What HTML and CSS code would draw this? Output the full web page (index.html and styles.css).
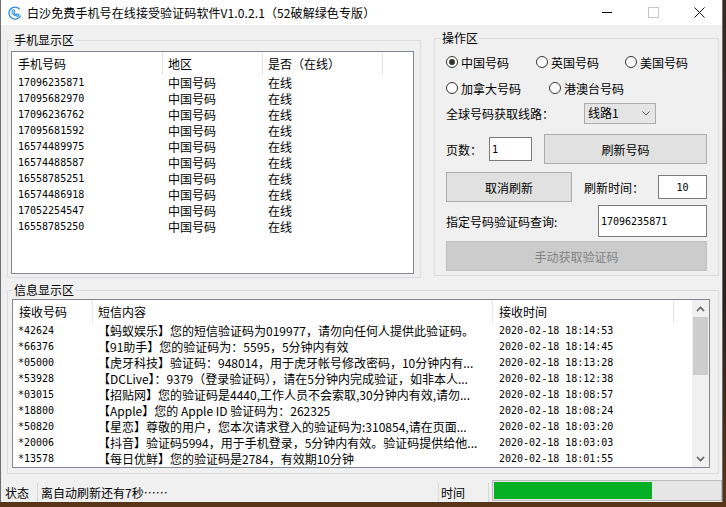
FILE: index.html
```html
<!DOCTYPE html>
<html lang="zh-CN">
<head>
<meta charset="utf-8">
<title>白沙免费手机号在线接受验证码软件</title>
<link rel="stylesheet" href="styles.css">
</head>
<body>
<div class="window">
  <div class="titlebar">
    <svg class="app-icon" viewBox="0 0 14 14">
      <path d="M11.6 3.2 A6 6 0 1 0 12.6 9.4" fill="none" stroke="#2d8ee3" stroke-width="1.4"/>
      <path d="M4.6 4.2 L6 3.8 L6.8 5.6 L6 6.4 Q6.8 8 8.2 8.6 L9 7.8 L10.8 8.6 L10.4 10 Q6.8 10.6 4.2 7.2 Q3.8 5.6 4.6 4.2 Z" fill="none" stroke="#2d8ee3" stroke-width="1.1" stroke-linejoin="round"/>
    </svg>
    <span class="title">白沙免费手机号在线接受验证码软件V1.0.2.1（52破解绿色专版）</span>
    <div class="controls">
      <span class="ctl"><span class="min"></span></span>
      <span class="ctl"><span class="max"></span></span>
      <span class="ctl"><svg width="11" height="11" viewBox="0 0 11 11"><path d="M0.5 0.5 L10.5 10.5 M10.5 0.5 L0.5 10.5" stroke="#111" stroke-width="1"/></svg></span>
    </div>
  </div>

  <div class="client">
    <div class="top">
      <fieldset class="grp grp-phone">
        <legend>手机显示区</legend>
        <div class="grp-body phone-body">
          <div class="listview phone-list">
            <div class="lv-head">
              <div class="pc1">手机号码</div>
              <div class="pc2">地区</div>
              <div class="pc3">是否（在线）</div>
              <div class="pc4"></div>
            </div>
            <div class="lv-row"><span class="pc1 num">17096235871</span><span class="pc2">中国号码</span><span class="pc3">在线</span></div>
            <div class="lv-row"><span class="pc1 num">17095682970</span><span class="pc2">中国号码</span><span class="pc3">在线</span></div>
            <div class="lv-row"><span class="pc1 num">17096236762</span><span class="pc2">中国号码</span><span class="pc3">在线</span></div>
            <div class="lv-row"><span class="pc1 num">17095681592</span><span class="pc2">中国号码</span><span class="pc3">在线</span></div>
            <div class="lv-row"><span class="pc1 num">16574489975</span><span class="pc2">中国号码</span><span class="pc3">在线</span></div>
            <div class="lv-row"><span class="pc1 num">16574488587</span><span class="pc2">中国号码</span><span class="pc3">在线</span></div>
            <div class="lv-row"><span class="pc1 num">16558785251</span><span class="pc2">中国号码</span><span class="pc3">在线</span></div>
            <div class="lv-row"><span class="pc1 num">16574486918</span><span class="pc2">中国号码</span><span class="pc3">在线</span></div>
            <div class="lv-row"><span class="pc1 num">17052254547</span><span class="pc2">中国号码</span><span class="pc3">在线</span></div>
            <div class="lv-row"><span class="pc1 num">16558785250</span><span class="pc2">中国号码</span><span class="pc3">在线</span></div>
          </div>
        </div>
      </fieldset>

      <fieldset class="grp grp-ops">
        <legend>操作区</legend>
        <div class="grp-body ops-body">
          <div class="orow r1">
            <span class="radio on w1"><span class="rb"></span>中国号码</span>
            <span class="radio w2"><span class="rb"></span>英国号码</span>
            <span class="radio"><span class="rb"></span>美国号码</span>
          </div>
          <div class="orow r2">
            <span class="radio w3"><span class="rb"></span>加拿大号码</span>
            <span class="radio"><span class="rb"></span>港澳台号码</span>
          </div>
          <div class="orow r3">
            <span class="lbl l-line">全球号码获取线路：</span>
            <span class="combo">线路1<svg width="8" height="5" viewBox="0 0 8 5"><path d="M0.5 0.5 L4 4 L7.5 0.5" fill="none" stroke="#555" stroke-width="1"/></svg></span>
          </div>
          <div class="orow r4">
            <span class="lbl l-page">页数：</span>
            <span class="tb tb-page num">1</span>
            <span class="btn b-refresh">刷新号码</span>
          </div>
          <div class="orow r5">
            <span class="btn b-cancel">取消刷新</span>
            <span class="lbl l-time">刷新时间：</span>
            <span class="tb tb-time num">10</span>
          </div>
          <div class="orow r6">
            <span class="lbl l-query">指定号码验证码查询:</span>
            <span class="tb tb-query num">17096235871</span>
          </div>
          <div class="orow r7">
            <span class="btn b-manual disabled">手动获取验证码</span>
          </div>
        </div>
      </fieldset>
    </div>

    <fieldset class="grp grp-info">
      <legend>信息显示区</legend>
      <div class="grp-body info-body">
        <div class="listview info-list">
          <div class="info-data">
            <div class="lv-head ih">
              <div class="ic1">接收号码</div>
              <div class="ic2">短信内容</div>
              <div class="ic3">接收时间</div>
              <div class="ic4"></div>
            </div>
            <div class="lv-row"><span class="ic1 num">*42624</span><span class="ic2">【蚂蚁娱乐】您的短信验证码为019977，请勿向任何人提供此验证码。</span><span class="ic3 num">2020-02-18 18:14:53</span></div>
            <div class="lv-row"><span class="ic1 num">*66376</span><span class="ic2">【91助手】您的验证码为：5595，5分钟内有效</span><span class="ic3 num">2020-02-18 18:14:45</span></div>
            <div class="lv-row"><span class="ic1 num">*05000</span><span class="ic2">【虎牙科技】验证码：948014，用于虎牙帐号修改密码，10分钟内有...</span><span class="ic3 num">2020-02-18 18:13:28</span></div>
            <div class="lv-row"><span class="ic1 num">*53928</span><span class="ic2">【DCLive】：9379（登录验证码），请在5分钟内完成验证，如非本人...</span><span class="ic3 num">2020-02-18 18:12:38</span></div>
            <div class="lv-row"><span class="ic1 num">*03015</span><span class="ic2">【招贴网】您的验证码是4440,工作人员不会索取,30分钟内有效,请勿...</span><span class="ic3 num">2020-02-18 18:08:57</span></div>
            <div class="lv-row"><span class="ic1 num">*18800</span><span class="ic2">【Apple】您的 Apple ID 验证码为：262325</span><span class="ic3 num">2020-02-18 18:08:24</span></div>
            <div class="lv-row"><span class="ic1 num">*50820</span><span class="ic2">【星恋】尊敬的用户，您本次请求登入的验证码为:310854,请在页面...</span><span class="ic3 num">2020-02-18 18:03:20</span></div>
            <div class="lv-row"><span class="ic1 num">*20006</span><span class="ic2">【抖音】验证码5994，用于手机登录，5分钟内有效。验证码提供给他...</span><span class="ic3 num">2020-02-18 18:03:03</span></div>
            <div class="lv-row"><span class="ic1 num">*13578</span><span class="ic2">【每日优鲜】您的验证码是2784，有效期10分钟</span><span class="ic3 num">2020-02-18 18:01:55</span></div>
          </div>
          <div class="vscroll">
            <span class="sb-btn"><svg width="9" height="6" viewBox="0 0 9 6"><path d="M1 5 L4.5 1.5 L8 5" fill="none" stroke="#606060" stroke-width="1.6"/></svg></span>
            <span class="sb-thumb"></span>
            <span class="sb-track"></span>
            <span class="sb-btn"><svg width="9" height="6" viewBox="0 0 9 6"><path d="M1 1 L4.5 4.5 L8 1" fill="none" stroke="#606060" stroke-width="1.6"/></svg></span>
          </div>
        </div>
      </div>
    </fieldset>
  </div>

  <div class="statusbar">
    <div class="sb-cell s1">状态</div>
    <div class="sb-cell s2">离自动刷新还有7秒……</div>
    <div class="sb-cell s3">时间</div>
    <div class="progress"><div class="bar" style="width:70%"></div></div>
  </div>
</div>
</body>
</html>
```

FILE: styles.css
```css
* { box-sizing: border-box; }
html, body { margin: 0; height: 100%; }
body {
  background: linear-gradient(180deg, #3a2a1f 0%, #2a211c 60%, #5a3518 100%);
  font-family: "Noto Sans CJK SC", "Microsoft YaHei", sans-serif;
  font-size: 12px;
  color: #000;
  overflow: hidden;
}
.num { font-family: "DejaVu Sans Mono", "Noto Sans CJK SC", monospace; font-size: 10px; }

.window {
  width: 723px;
  height: 502px;
  background: #f0f0f0;
  border-left: 1px solid #6e6e6e;
  border-right: 1px solid #6e6e6e;
  display: flex;
  flex-direction: column;
}

/* title bar */
.titlebar { height: 25px; background: #fff; display: flex; align-items: center; flex: none; }
.app-icon { width: 14px; height: 14px; margin-left: 7px; margin-right: 5px; flex: none; }
.title { line-height: 25px; white-space: nowrap; letter-spacing: 0.1px; }
.controls { margin-left: auto; display: flex; height: 25px; }
.ctl { width: 46px; height: 25px; display: flex; align-items: center; justify-content: center; }
.min { width: 10px; height: 1px; background: #000; }
.max { width: 11px; height: 11px; border: 1px solid #c6c6c6; }

/* client */
.client { flex: 1; display: flex; flex-direction: column; padding-left: 6px; }
.top { display: flex; align-items: flex-start; }

.grp { border: 1px solid #dcdcdc; margin: 0; padding: 0; min-width: 0; }
.grp legend { padding: 0 1px; margin-left: 5px; height: 16px; line-height: 16px; }

.grp-phone { width: 414px; margin-top: 7px; }
.phone-body { padding: 3px 6px 3px 3px; }
.grp-ops { width: 285px; margin-top: 5px; margin-left: 13px; }
.grp-ops legend { margin-left: 6px; }
.ops-body { padding: 0 0 4px 11px; display: flex; flex-direction: column; }
.grp-info { width: 712px; margin-top: 4px; }
.info-body { padding: 1px 8px 5px 4px; }

/* list views */
.listview { background: #fff; border: 1px solid #828790; overflow: hidden; }
.lv-head { display: flex; height: 23px; }
.lv-head > div { border-right: 1px solid #e5e5e5; line-height: 23px; white-space: nowrap; flex: none; }
.lv-head > div:last-child { border-right: none; flex: 1; }
.lv-row { display: flex; height: 16px; line-height: 16px; white-space: nowrap; }
.lv-row > span { flex: none; overflow: hidden; }

.phone-list { height: 223px; }
.pc1 { width: 151px; padding-left: 6px; }
.pc2 { width: 100px; padding-left: 5px; }
.pc3 { width: 120px; padding-left: 5px; }

.info-list { height: 169px; display: flex; }
.info-data { flex: 1; overflow: hidden; }
.lv-head.ih { height: 23px; }
.lv-head.ih > div { line-height: 24px; }
.ic1 { width: 80px; padding-left: 6px; }
.lv-row .ic1 { padding-left: 5px; }
.ic2 { width: 400px; padding-left: 5px; }
.ic3 { width: 181px; padding-left: 6px; }

.vscroll { width: 17px; flex: none; background: #f0f0f0; display: flex; flex-direction: column; }
.sb-btn { height: 17px; flex: none; display: flex; align-items: center; justify-content: center; }
.sb-thumb { height: 58px; margin: 0 1px; background: #cdcdcd; flex: none; }
.sb-track { flex: 1; }

/* operation rows */
.orow { display: flex; align-items: center; flex: none; white-space: nowrap; }
.r1 { margin-top: 6px; height: 20px; }
.r2 { margin-top: 6px; height: 20px; }
.r3 { margin-top: 5px; height: 21px; }
.r4 { margin-top: 10px; height: 30px; }
.r5 { margin-top: 8px; height: 30px; }
.r6 { margin-top: 3px; height: 32px; }
.r7 { margin-top: 4px; height: 30px; }

.radio { display: flex; align-items: center; }
.radio.w1 { width: 90px; }
.radio.w2 { width: 89px; }
.radio.w3 { width: 103px; }
.rb {
  width: 12px; height: 12px; border: 1px solid #333; border-radius: 50%;
  background: #fff; margin-right: 3px; display: flex; align-items: center; justify-content: center;
}
.radio.on .rb::after { content: ""; width: 6px; height: 6px; border-radius: 50%; background: #333; }

.lbl { flex: none; }
.l-line { width: 138px; }
.l-page { width: 43px; }
.l-time { width: 74px; margin-left: 12px; }
.l-query { width: 152px; }

.combo {
  width: 72px; height: 21px; background: #e5e5e5; border: 1px solid #acacac;
  display: flex; align-items: center; padding-left: 3px; padding-bottom: 2px;
}
.combo svg { margin-left: auto; margin-right: 5px; margin-top: 2px; }

.tb { background: #fff; border: 1px solid #7a7a7a; display: flex; align-items: center; padding-left: 2px; flex: none; }
.tb-page { width: 43px; height: 24px; }
.tb-time { width: 49px; height: 24px; justify-content: center; padding-left: 0; }
.tb-query { width: 109px; height: 32px; }

.btn {
  background: #e1e1e1; border: 1px solid #adadad; height: 30px;
  display: flex; align-items: center; justify-content: center; flex: none;
}
.b-refresh { width: 163px; margin-left: 12px; }
.b-cancel { width: 126px; }
.b-manual { width: 261px; }
.btn.disabled { background: #cccccc; border-color: #bfbfbf; color: #838383; }

/* status bar */
.statusbar { height: 22px; flex: none; display: flex; }
.sb-cell { margin-top: 3px; height: 19px; line-height: 20px; border-right: 1px solid #d7d7d7; white-space: nowrap; }
.s1 { width: 37px; padding-left: 4px; }
.s2 { width: 401px; padding-left: 3px; }
.s3 { width: 50px; padding-left: 2px; }
.progress {
  margin-left: 3px; width: 230px; height: 21px;
  border: 1px solid #bcbcbc; background: #e6e6e6; padding: 1px;
}
.bar { height: 100%; background: #06b025; }
```
